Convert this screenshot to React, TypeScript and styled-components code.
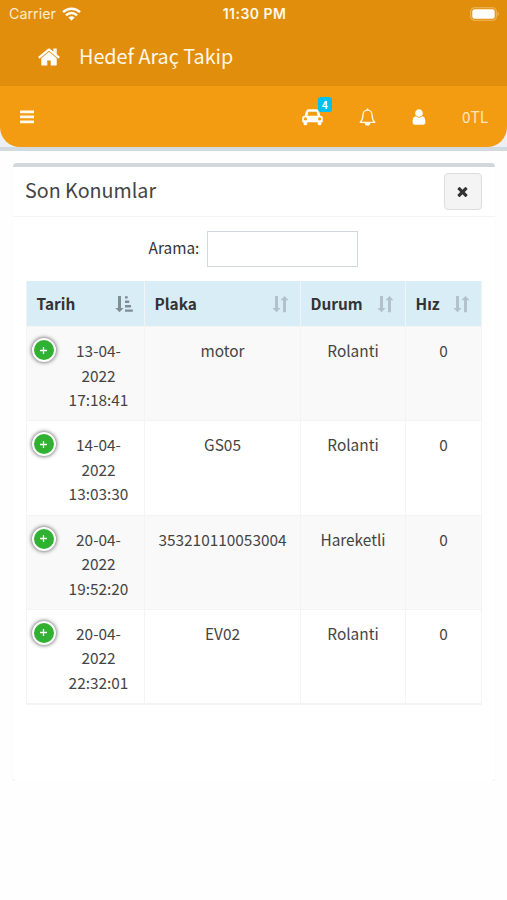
import React from "react";
import styled, { createGlobalStyle, css } from "styled-components";

const Global = createGlobalStyle`
  * { box-sizing: border-box; }
  body {
    margin: 0;
    background: #fefefe;
    color: #444;
    font-family: "Noto Sans CJK SC", "Noto Sans", sans-serif;
    font-size: 15.4px;
    line-height: 24.5px;
  }
`;

const Top = styled.header`
  height: 86px;
  background: #e08e0b;
  color: #fff8e8;
`;

const StatusBar = styled.div`
  height: 28px;
  padding: 0 7px 0 9px;
  display: grid;
  grid-template-columns: 1fr auto 1fr;
  align-items: center;
  font-family: Inter, sans-serif;
  font-size: 14px;
  line-height: 28px;
`;

const Carrier = styled.div`
  display: flex;
  align-items: center;
  gap: 6px;
  font-size: 14.3px;
  color: #fdeccb;
`;

const Clock = styled.div`
  font-weight: 600;
  font-size: 14px;
  letter-spacing: 0.45px;
`;

const Battery = styled.svg`
  justify-self: end;
  display: block;
`;

const Brand = styled.div`
  display: flex;
  align-items: center;
  height: 58px;
  padding: 0 0 1px 37px;
  gap: 18px;
  font-size: 19.8px;
`;

const Icon = styled.svg`
  display: block;
  flex: none;
`;

const NavBacking = styled.div`
  height: 65px;
  background: #ecf0f5;
  border-bottom: 4px solid #d2d9df;
`;

const Nav = styled.nav`
  height: 61px;
  display: flex;
  align-items: center;
  padding: 1px 19px 0 20px;
  background: #f39c12;
  border-radius: 0 0 20px 20px;
  color: #fff9ec;
`;

const NavItems = styled.div`
  display: flex;
  align-items: center;
  margin-left: auto;
`;

const NavItem = styled.div<{ $gap?: number }>`
  position: relative;
  margin-left: ${(p) => p.$gap ?? 0}px;
`;

const Badge = styled.span`
  position: absolute;
  top: -11px;
  left: 16px;
  width: 14px;
  height: 15px;
  border-radius: 3px;
  background: #00c0ef;
  color: #fff;
  font-size: 10px;
  font-weight: 700;
  line-height: 15px;
  text-align: center;
`;

const Balance = styled(NavItem)`
  color: #fde6bd;
  font-size: 15.4px;
  padding-bottom: 1px;
`;

const Card = styled.section`
  margin: 12px 12px 0 13px;
  height: 618px;
  border-top: 4px solid #d2d6de;
  border-radius: 4px;
  background: #fff;
  box-shadow: 0 1px 1px rgba(0, 0, 0, 0.1);
`;

const CardHeader = styled.div`
  height: 50px;
  display: flex;
  align-items: center;
  justify-content: space-between;
  padding: 0 13px 0 12px;
  border-bottom: 1px solid #f4f4f4;
`;

const Title = styled.h3`
  margin: 0;
  padding-bottom: 3px;
  font-size: 19.7px;
  font-weight: 400;
`;

const CloseButton = styled.button`
  width: 38px;
  height: 37px;
  padding: 0 1px 0 0;
  display: grid;
  place-items: center;
  border: 1px solid #ddd;
  border-radius: 4px;
  background: #f4f4f4;
  color: #333;
`;

const CardBody = styled.div`
  padding: 14px 13px 0;
`;

const Search = styled.label`
  display: flex;
  justify-content: center;
  align-items: center;
  gap: 8px;
  margin-right: 1px;
  height: 36px;
  color: #333;
`;

const SearchText = styled.span`
  padding-bottom: 3px;
`;

const SearchInput = styled.input`
  width: 151px;
  height: 36px;
  border: 1px solid #d2d6de;
  background: #fff;
  outline: none;
`;

const Table = styled.table`
  width: 456px;
  margin-top: 14px;
  table-layout: fixed;
  border-collapse: separate;
  border-spacing: 0;
  border: 1px solid #f4f4f4;
  border-top: 0;
`;

const Head = styled.th`
  height: 46px;
  padding: 0 11px 0 10px;
  background: #d9edf7;
  border-right: 1px solid #eef4f7;
  border-bottom: 1px solid #f4f4f4;
  color: #333;
  font-weight: 700;
  &:last-child { border-right: 0; }
`;

const HeadInner = styled.div`
  display: flex;
  align-items: center;
  justify-content: space-between;
  margin-left: -0.5px;
`;

const Row = styled.tr<{ $odd: boolean }>`
  height: 94.3px;
  background: ${(p) => (p.$odd ? "#f9f9f9" : "#fff")};
`;

const Cell = styled.td<{ $first?: boolean }>`
  height: 94.3px;
  padding: 11px 10px 0;
  vertical-align: top;
  text-align: center;
  border-right: 1px solid #f4f4f4;
  border-bottom: 1px solid #f4f4f4;
  &:last-child { border-right: 0; }
  ${(p) => p.$first && css`padding: 11px 10px 0 3.5px;`}
`;

const DateCell = styled.div`
  display: flex;
  align-items: flex-start;
  gap: 8px;
`;

const DateText = styled.div`
  width: 66px;
  margin-left: 2px;
  text-align: center;
`;

const Expand = styled.span`
  flex: none;
  width: 24px;
  height: 24px;
  margin: 0 0 0 1px;
  display: grid;
  place-items: center;
  border: 2.5px solid #fff;
  border-radius: 50%;
  background: #31b131;
  box-shadow: 0 0 4px #444;
  color: #fff;
`;

const HOME =
  "M1472 992v480q0 26-19 45t-45 19h-384v-384h-256v384h-384q-26 0-45-19t-19-45v-480q0-1 .5-3t.5-3l575-474 575 474q1 2 1 6zm223-69l-62 74q-8 9-21 11h-3q-13 0-21-7l-692-577-692 577q-12 8-24 7-13-2-21-11l-62-74q-8-10-7-23.5t11-21.5l719-599q32-26 76-26t76 26l244 204v-195q0-14 9-23t23-9h192q14 0 23 9t9 23v408l219 182q10 8 11 21.5t-7 23.5z";
const CAR =
  "M480 1088q0-66-47-113t-113-47-113 47-47 113 47 113 113 47 113-47 47-113zm36-320h1016l-89-357q-2-8-14-17.5t-21-9.5h-768q-9 0-21 9.5t-14 17.5zm1372 320q0-66-47-113t-113-47-113 47-47 113 47 113 113 47 113-47 47-113zm160-96v384q0 14-9 23t-23 9h-96v128q0 80-56 136t-136 56-136-56-56-136v-128h-1024v128q0 80-56 136t-136 56-136-56-56-136v-128h-96q-14 0-23-9t-9-23v-384q0-93 65.5-158.5t158.5-65.5h28l105-419q23-94 104-157.5t179-63.5h768q98 0 179 63.5t104 157.5l105 419h28q93 0 158.5 65.5t65.5 158.5z";
const USER =
  "M1536 1399q0 109-62.5 187t-150.5 78h-854q-88 0-150.5-78t-62.5-187q0-85 8.5-160.5t31.5-152 58.5-131 94-89 134.5-34.5q131 128 313 128t313-128q76 0 134.5 34.5t94 89 58.5 131 31.5 152 8.5 160.5zm-256-887q0 159-112.5 271.5t-271.5 112.5-271.5-112.5-112.5-271.5 112.5-271.5 271.5-112.5 271.5 112.5 112.5 271.5z";
const TIMES =
  "M1490 1322q0 40-28 68l-136 136q-28 28-68 28t-68-28l-294-294-294 294q-28 28-68 28t-68-28l-136-136q-28-28-28-68t28-68l294-294-294-294q-28-28-28-68t28-68l136-136q28-28 68-28t68 28l294 294 294-294q28-28 68-28t68 28l136 136q28 28 28 68t-28 68l-294 294 294 294q28 28 28 68z";

const Wifi = () => (
  <Icon width="19" height="14" viewBox="0 0 19 14" fill="none" stroke="#fff" strokeWidth="2.5">
    <path d="M1 5.1a12.2 12.2 0 0 1 17 0M4 8.3a8 8 0 0 1 11 0" />
    <path d="M6.4 10.6a4.4 4.4 0 0 1 6.2 0L9.5 13.8z" fill="#fff" stroke="none" />
  </Icon>
);

const SortBoth = () => (
  <Icon width="17" height="18" viewBox="0 0 17 18" fill="#b1c2cb">
    <path d="M3 1h3v12h2.6l-4.1 4.3L.4 13H3zM11 17.3V5.3H8.4L12.5 1l4.1 4.3H14v12z" />
  </Icon>
);

const SortAsc = () => (
  <Icon width="18" height="18" viewBox="0 0 18 18" fill="#7f8d95">
    <path d="M3 1h3v12h2.6l-4.1 4.3L.4 13H3zM10 1.2h2.7v2.4H10zM10 5.6h4.2V8H10zM10 10h6v2.4h-6zM10 14.4h7.8v2.4H10z" />
  </Icon>
);

const columns = [
  { label: "Tarih", width: 118, sorted: true },
  { label: "Plaka", width: 156 },
  { label: "Durum", width: 105 },
  { label: "Hız", width: 75 },
];

const rows = [
  { date: "13-04-", year: "2022", time: "17:18:41", plate: "motor", state: "Rolanti", speed: 0 },
  { date: "14-04-", year: "2022", time: "13:03:30", plate: "GS05", state: "Rolanti", speed: 0 },
  { date: "20-04-", year: "2022", time: "19:52:20", plate: "353210110053004", state: "Hareketli", speed: 0 },
  { date: "20-04-", year: "2022", time: "22:32:01", plate: "EV02", state: "Rolanti", speed: 0 },
];

export default function App() {
  return (
    <>
      <Global />
      <Top>
        <StatusBar>
          <Carrier>
            Carrier
            <Wifi />
          </Carrier>
          <Clock>11:30 PM</Clock>
          <Battery width="30" height="14" viewBox="0 0 30 14">
            <rect x="0.7" y="0.7" width="25.6" height="12.6" rx="3.8" fill="none" stroke="#eebb66" strokeWidth="1.1" />
            <rect x="2.3" y="2.3" width="22.4" height="9.4" rx="2.3" fill="#fff" />
            <path d="M27.6 4.8a2.6 2.6 0 0 1 0 4.4z" fill="#eebb66" />
          </Battery>
        </StatusBar>
        <Brand>
          <Icon width="24" height="24" viewBox="0 0 1792 1792" fill="#fff">
            <path d={HOME} />
          </Icon>
          <span>Hedef Araç Takip</span>
        </Brand>
      </Top>
      <NavBacking>
        <Nav>
          <Icon width="14" height="14" viewBox="0 0 14 14" fill="currentColor">
            <path d="M0 .5h14v2.8H0zM0 5.5h14v2.8H0zM0 10.5h14v2.8H0z" />
          </Icon>
          <NavItems>
            <NavItem>
              <Icon width="21" height="18" viewBox="0 0 2048 1792" fill="#fff">
                <path d={CAR} />
              </Icon>
              <Badge>4</Badge>
            </NavItem>
            <NavItem $gap={36}>
              <Icon width="17" height="18" viewBox="0 0 17 18" fill="none" stroke="currentColor" strokeWidth="1.3">
                <path d="M8.5 2.2C5.6 2.2 4 4.4 4 6.8c0 3.8-1 5.8-2.8 7.6h14.6C14 12.6 13 10.6 13 6.8c0-2.4-1.6-4.6-4.5-4.6z" strokeLinejoin="round" />
                <path d="M6.3 14.8a2.2 2.2 0 0 0 4.4 0z" fill="currentColor" />
                <path d="M8.5.5v1.6" strokeWidth="1.8" />
              </Icon>
            </NavItem>
            <NavItem $gap={34}>
              <Icon width="18" height="18" viewBox="0 0 1792 1792" fill="#fff">
                <path d={USER} />
              </Icon>
            </NavItem>
            <Balance $gap={34}>0TL</Balance>
          </NavItems>
        </Nav>
      </NavBacking>
      <Card>
        <CardHeader>
          <Title>Son Konumlar</Title>
          <CloseButton aria-label="Kapat">
            <Icon width="15" height="15" viewBox="0 0 1792 1792" fill="currentColor">
              <path d={TIMES} />
            </Icon>
          </CloseButton>
        </CardHeader>
        <CardBody>
          <Search>
            <SearchText>Arama:</SearchText>
            <SearchInput type="search" />
          </Search>
          <Table>
            <colgroup>
              {columns.map((c) => (
                <col key={c.label} width={c.width} />
              ))}
            </colgroup>
            <thead>
              <tr>
                {columns.map((c) => (
                  <Head key={c.label}>
                    <HeadInner>
                      {c.label}
                      {c.sorted ? <SortAsc /> : <SortBoth />}
                    </HeadInner>
                  </Head>
                ))}
              </tr>
            </thead>
            <tbody>
              {rows.map((r, i) => (
                <Row key={r.time} $odd={i % 2 === 0}>
                  <Cell $first>
                    <DateCell>
                      <Expand>
                        <Icon width="9" height="9" viewBox="0 0 9 9" stroke="currentColor" strokeWidth="1.3">
                          <path d="M4.5 1v7M1 4.5h7" />
                        </Icon>
                      </Expand>
                      <DateText>
                        {r.date}
                        <br />
                        {r.year}
                        <br />
                        {r.time}
                      </DateText>
                    </DateCell>
                  </Cell>
                  <Cell>{r.plate}</Cell>
                  <Cell>{r.state}</Cell>
                  <Cell>{r.speed}</Cell>
                </Row>
              ))}
            </tbody>
          </Table>
        </CardBody>
      </Card>
    </>
  );
}
